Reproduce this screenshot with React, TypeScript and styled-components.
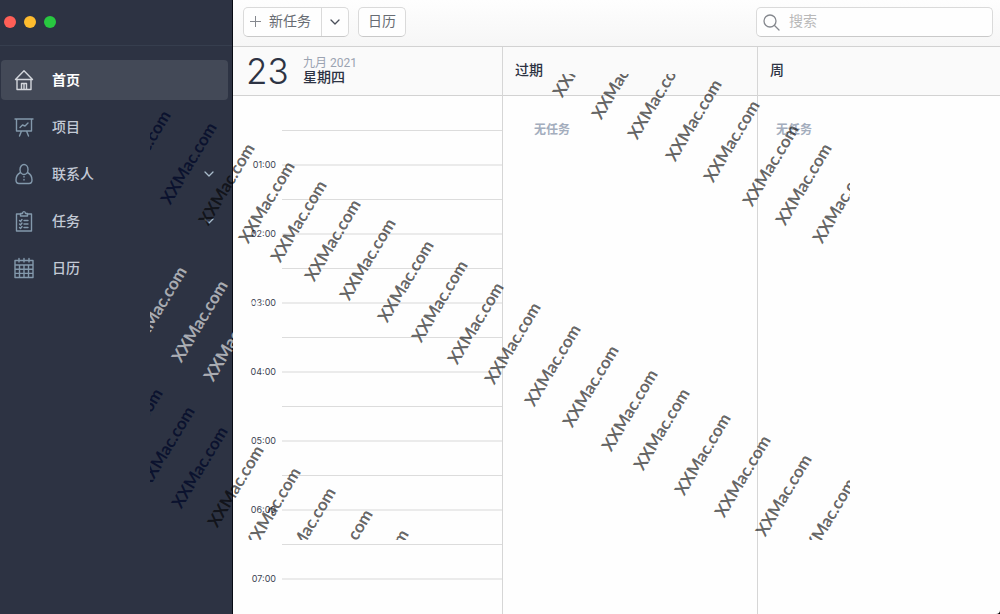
import React from "react";
import styled, { createGlobalStyle, css } from "styled-components";

const cjk = `"Noto Sans CJK SC", sans-serif`;

const GlobalStyle = createGlobalStyle`
  *, *::before, *::after { box-sizing: border-box; }
  body { margin: 0; background: #000; font-family: Inter, ${cjk}; font-size: 14px; line-height: 20px; }
  button, input { font: inherit; }
`;

const Page = styled.div`
  position: relative;
  display: flex;
  height: 100vh;
  overflow: hidden;
  background: #fefefe;
  border-bottom-right-radius: 4px;
`;

const Sidebar = styled.aside`
  flex: none;
  width: 233px;
  background: #2d3343;
  border-right: 1px solid #080b14;
`;

const WindowControls = styled.div`
  display: flex;
  align-items: center;
  gap: 8px;
  height: 46px;
  padding: 0 4px 2px;
  border-bottom: 1px solid #363e4e;
`;

const Light = styled.button<{ $color: string }>`
  width: 12px;
  height: 12px;
  padding: 0;
  border: 0;
  border-radius: 50%;
  background: ${(p) => p.$color};
`;

const NavList = styled.nav`
  display: flex;
  flex-direction: column;
  gap: 7px;
  padding: 14px 4px 0 1px;
`;

const NavItem = styled.a<{ $active?: boolean }>`
  display: flex;
  align-items: center;
  height: 40px;
  padding: 0 14px 0 13px;
  border-radius: 4px;
  color: #c3cad6;
  font-weight: 500;
  text-decoration: none;
  ${(p) =>
    p.$active &&
    css`
      background: #434957;
      color: #fff;
      font-weight: 700;
    `}
`;

const NavLabel = styled.span`
  flex: 1;
  margin-left: 18px;
`;

const NavIcon = styled.svg<{ $active?: boolean }>`
  width: 20px;
  height: 22px;
  fill: none;
  stroke: ${(p) => (p.$active ? "#d3d6dc" : "#8399ac")};
  stroke-width: 1.4;
  stroke-linecap: round;
  stroke-linejoin: round;
`;

const Chevron = styled.svg<{ $color: string }>`
  width: 10px;
  height: 6px;
  fill: none;
  stroke: ${(p) => p.$color};
  stroke-width: 1.3;
  stroke-linecap: round;
  stroke-linejoin: round;
`;

const Main = styled.main`
  display: flex;
  flex: 1;
  flex-direction: column;
  min-width: 0;
`;

const Toolbar = styled.header`
  display: flex;
  flex: none;
  align-items: center;
  gap: 9px;
  height: 47px;
  padding: 0 7px 2px 10px;
  background: linear-gradient(#fefefe, #f6f6f6);
  border-bottom: 1px solid #d2d2d2;
`;

const control = css`
  height: 30px;
  background: #fefefe;
  border: 1px solid #dadada;
  border-bottom-color: #c9c9c9;
  border-radius: 5px;
`;

const SplitButton = styled.div`
  ${control}
  display: flex;
`;

const SegmentButton = styled.button<{ $divided?: boolean }>`
  display: flex;
  align-items: center;
  justify-content: center;
  min-width: 27px;
  padding: ${(p) => (p.$divided ? "0" : "0 10px 2px 6px")};
  gap: 8px;
  border: 0;
  border-left: ${(p) => (p.$divided ? "1px solid #dadada" : "0")};
  background: none;
  color: #686c73;
`;

const PlainButton = styled.button`
  ${control}
  width: 48px;
  padding: 0 0 2px;
  color: #686c73;
`;

const PlusIcon = styled.svg`
  width: 11px;
  height: 11px;
  stroke: #85888e;
  stroke-width: 1;
`;

const SearchField = styled.label`
  ${control}
  display: flex;
  align-items: center;
  gap: 9px;
  width: 237px;
  margin-left: auto;
  padding: 0 6px;
`;

const SearchIcon = styled.svg`
  flex: none;
  width: 17px;
  height: 17px;
  fill: none;
  stroke: #85888e;
  stroke-width: 1.3;
  stroke-linecap: round;
`;

const SearchInput = styled.input`
  flex: 1;
  min-width: 0;
  padding: 0 0 2px;
  border: 0;
  outline: 0;
  background: none;
  &::placeholder { color: #b9b9b9; opacity: 1; }
`;

const Board = styled.div`
  display: grid;
  flex: 1;
  grid-template-columns: minmax(0, 270fr) minmax(0, 255fr) minmax(0, 242fr);
  min-height: 0;
`;

const Column = styled.section`
  min-height: 0;
  overflow: hidden;
  &:not(:last-child) { border-right: 1px solid #d6d6d6; }
`;

const ColumnHeader = styled.div`
  display: flex;
  align-items: center;
  height: 49px;
  padding: 0 12px 2px;
  background: #fafafa;
  border-bottom: 1px solid #d2d2d2;
`;

const ColumnTitle = styled.h2`
  margin: 0;
  color: #2d3343;
  font-size: 14px;
  font-weight: 500;
`;

const Weekday = styled(ColumnTitle)`
  line-height: 14px;
`;

const DayNumber = styled.span`
  width: 55px;
  padding: 2px 0 0 1px;
  color: #2d3343;
  font-size: 35px;
  font-weight: 300;
  line-height: 40px;
`;

const DayText = styled.div`
  display: flex;
  flex-direction: column;
  padding-left: 3px;
`;

const MonthYear = styled.span`
  color: #9ba3b1;
  font-family: Roboto, ${cjk};
  font-size: 12px;
  line-height: 14px;
`;

const Empty = styled.p<{ $inset: number }>`
  margin: 24px 0 0;
  padding-left: ${(p) => p.$inset}px;
  color: #a3adbd;
  font-size: 12px;
  font-weight: 700;
`;

const Hours = styled.ol`
  margin: 0;
  padding: 1px 0 0;
  list-style: none;
`;

const Hour = styled.li`
  display: flex;
  height: 69px;
`;

const HourLabel = styled.time`
  align-self: flex-end;
  flex: none;
  width: 49px;
  margin-bottom: -4px;
  padding-right: 6px;
  color: #3d4352;
  font-size: 9px;
  line-height: 10px;
  text-align: right;
`;

const HourLines = styled.div`
  flex: 1;
  padding-top: 33px;
  border-bottom: 2px solid #ebebeb;
  &::before { content: ""; display: block; height: 1px; background: #dcdcdc; }
`;

const MarkLayer = styled.div`
  position: absolute;
  left: 150px;
  top: 74px;
  width: 700px;
  height: 466px;
  overflow: hidden;
  pointer-events: none;
`;

const tones = { grey: "rgba(0, 0, 0, 0.62)", navy: "rgba(0, 8, 40, 0.75)", light: "rgba(255, 255, 255, 0.6)" };
type Tone = keyof typeof tones;

const Mark = styled.span<{ $x: number; $y: number; $tone: Tone }>`
  position: absolute;
  left: ${(p) => p.$x - 150}px;
  top: ${(p) => p.$y - 92}px;
  color: ${(p) => tones[p.$tone]};
  font-family: Lato, sans-serif;
  font-size: 17px;
  font-weight: 700;
  line-height: 24px;
  transform: rotate(-59deg);
  transform-origin: 0 19px;
  white-space: nowrap;
`;

const marks: [number, number, Tone?][] = [
  [563, 98], [602, 120], [638, 140], [676, 162], [714, 183], [753, 207], [786, 226], [823, 244],
  [125, 193, "navy"], [171, 205, "navy"], [209, 226], [249, 244], [281, 263], [315, 282], [350, 301],
  [388, 323], [422, 343], [458, 365], [495, 385], [535, 407], [573, 428], [612, 452], [644, 471],
  [685, 496], [725, 518], [766, 537], [810, 561],
  [141, 349, "light"], [182, 363, "light"], [214, 382, "light"],
  [117, 471, "navy"], [149, 489, "navy"], [182, 509, "navy"], [218, 528], [255, 550], [290, 570],
  [327, 592], [363, 612],
];

const icons = {
  home: <path d="M1.500 10.500 10 1.800l8.500 8.700H1.500M3 11v9.500h14V11M7.500 20.500v-6h5v6M10 14.500v6" />,
  board: <path d="M1 3h18M2.500 3v12h15V3M7.500 15 5.500 20M12.500 15l2 5M6 11.500l2.500-2.500 2.500 1L14 7" />,
  person: (
    <>
      <ellipse cx="10" cy="6.500" rx="4" ry="5" />
      <path d="M6.500 9.500C3.500 11 2 13.500 2 17c0 2.500 1 3.500 3 3.500h10c2 0 3-1 3-3.500 0-3.500-1.500-6-4.500-7.500M10 13.500v.5M10 16.500v.5" />
    </>
  ),
  clipboard: (
    <path d="M7 4H2.500v17h15V4H13M6.500 6V3.500h2c0-2.500 3-2.500 3 0h2V6zM5.500 10.500l1 1 1.500-2M10 10.500h4M5.500 14l1 1 1.500-2M10 14h4M5.500 17.500l1 1 1.500-2M10 17.500h4" />
  ),
  calendar: (
    <path d="M1 3.500h18v17H1zM1 8h18M1 12.200h18M1 16.400h18M5.500 8v12.500M10 8v12.500M14.500 8v12.500M5 1.500v3.500M10 1.500v3.500M15 1.500v3.500" />
  ),
};

const navItems: { label: string; icon: keyof typeof icons; active?: boolean; expandable?: boolean }[] = [
  { label: "首页", icon: "home", active: true },
  { label: "项目", icon: "board" },
  { label: "联系人", icon: "person", expandable: true },
  { label: "任务", icon: "clipboard", expandable: true },
  { label: "日历", icon: "calendar" },
];

const hours = ["01:00", "02:00", "03:00", "04:00", "05:00", "06:00", "07:00"];

const ChevronDown = ({ color }: { color: string }) => (
  <Chevron $color={color} viewBox="0 0 10 6" aria-hidden="true">
    <path d="M1 1l4 4 4-4" />
  </Chevron>
);

export default function App() {
  return (
    <>
      <GlobalStyle />
      <Page>
        <Sidebar>
          <WindowControls>
            <Light $color="#ff5f57" aria-label="关闭" />
            <Light $color="#febc2e" aria-label="最小化" />
            <Light $color="#28c840" aria-label="缩放" />
          </WindowControls>
          <NavList>
            {navItems.map((item) => (
              <NavItem key={item.label} href="#" $active={item.active}>
                <NavIcon $active={item.active} viewBox="0 0 20 22" aria-hidden="true">
                  {icons[item.icon]}
                </NavIcon>
                <NavLabel>{item.label}</NavLabel>
                {item.expandable && <ChevronDown color="#a9bccb" />}
              </NavItem>
            ))}
          </NavList>
        </Sidebar>
        <Main>
          <Toolbar>
            <SplitButton>
              <SegmentButton>
                <PlusIcon viewBox="0 0 11 11" aria-hidden="true">
                  <path d="M5.500 0v11M0 5.500h11" />
                </PlusIcon>
                新任务
              </SegmentButton>
              <SegmentButton $divided aria-label="更多">
                <ChevronDown color="#4a4f5a" />
              </SegmentButton>
            </SplitButton>
            <PlainButton>日历</PlainButton>
            <SearchField>
              <SearchIcon viewBox="0 0 17 17" aria-hidden="true">
                <circle cx="7" cy="7" r="6" />
                <path d="M11.500 11.500 16 16" />
              </SearchIcon>
              <SearchInput type="text" placeholder="搜索" aria-label="搜索" />
            </SearchField>
          </Toolbar>
          <Board>
            <Column>
              <ColumnHeader>
                <DayNumber>23</DayNumber>
                <DayText>
                  <MonthYear>九月 2021</MonthYear>
                  <Weekday>星期四</Weekday>
                </DayText>
              </ColumnHeader>
              <Hours>
                {hours.map((hour) => (
                  <Hour key={hour}>
                    <HourLabel>{hour}</HourLabel>
                    <HourLines />
                  </Hour>
                ))}
              </Hours>
            </Column>
            <Column>
              <ColumnHeader>
                <ColumnTitle>过期</ColumnTitle>
              </ColumnHeader>
              <Empty $inset={31}>无任务</Empty>
            </Column>
            <Column>
              <ColumnHeader>
                <ColumnTitle>周</ColumnTitle>
              </ColumnHeader>
              <Empty $inset={18}>无任务</Empty>
            </Column>
          </Board>
        </Main>
        <MarkLayer>
          {marks.map(([x, y, tone]) => (
            <Mark key={`${x}-${y}`} $x={x} $y={y} $tone={tone ?? "grey"}>
              XXMac.com
            </Mark>
          ))}
        </MarkLayer>
      </Page>
    </>
  );
}
